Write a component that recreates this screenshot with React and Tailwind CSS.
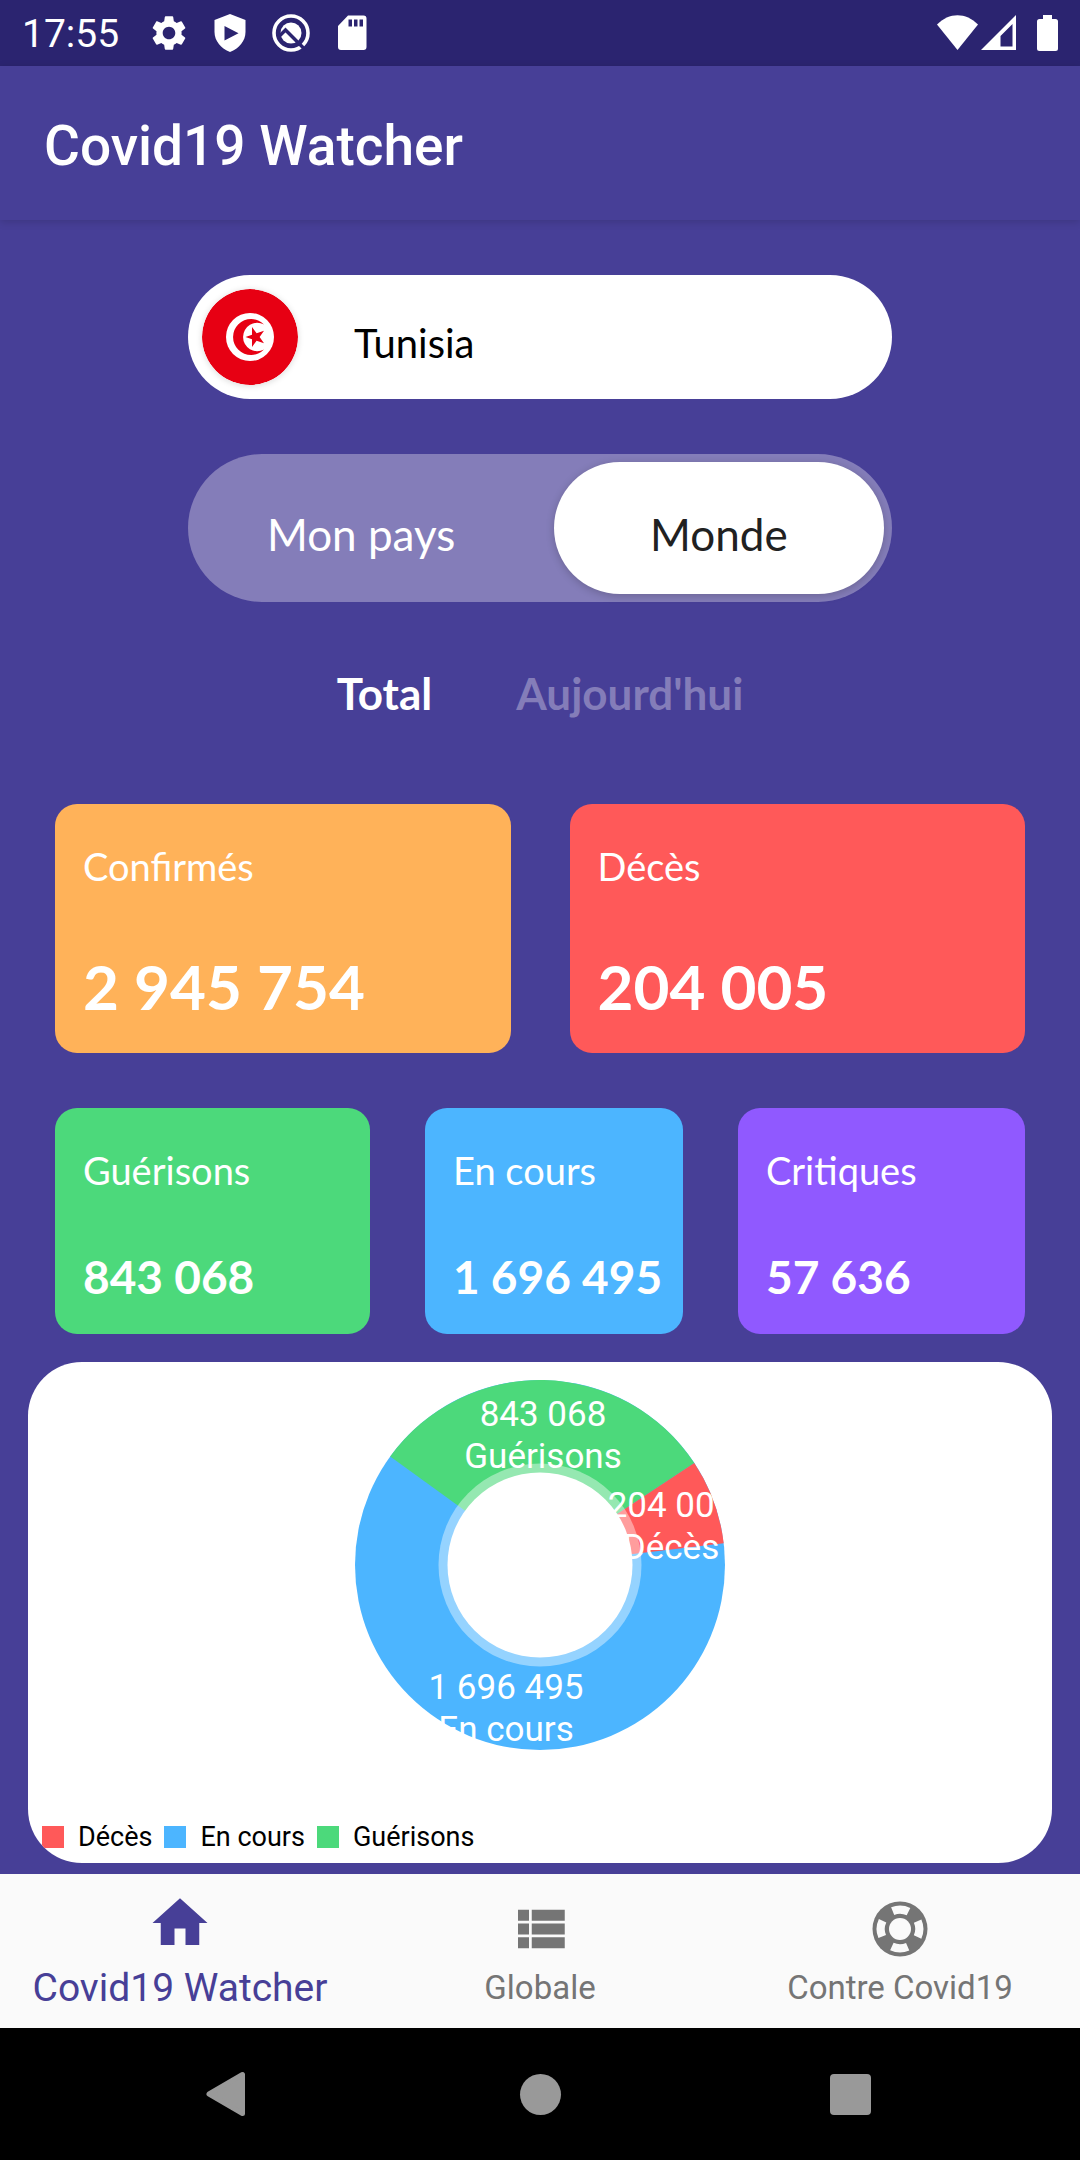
import React from "react";
import { MdSettings, MdHome } from "react-icons/md";

function ShieldPlayIcon() {
  return (
    <svg viewBox="0 0 42 42" className="size-[42px]" aria-hidden="true">
      <path
        fillRule="evenodd"
        fill="#fff"
        d="M21 2 36.500 8v12c0 9-6.500 16.500-15.500 20C12 36.500 5.500 29 5.500 20V8zM15.500 14v14.500l14-7.250z"
      />
    </svg>
  );
}

function QIcon() {
  return (
    <svg viewBox="0 0 42 42" className="size-[42px]" aria-hidden="true">
      <circle cx="21" cy="21" r="17" fill="none" stroke="#fff" strokeWidth="3.6" />
      <circle cx="21" cy="21" r="10.500" fill="#fff" />
      <path d="M9 24.500 15.500 18 35.500 38" fill="none" stroke="#2b2470" strokeWidth="3.4" />
    </svg>
  );
}

function SdCardIcon() {
  return (
    <svg viewBox="0 0 42 42" className="size-[42px]" aria-hidden="true">
      <path
        fillRule="evenodd"
        fill="#fff"
        d="M17 3.500h15.500a3 3 0 0 1 3 3v28.500a3 3 0 0 1-3 3H10a3 3 0 0 1-3-3V14zM17.500 7.500v7h3.500v-7zm5.500 0v7h3.500v-7zm5.500 0v7H32v-7z"
      />
    </svg>
  );
}

function StatusBar() {
  return (
    <div className="flex h-[66px] items-center bg-[#2b2470] pr-[22px] pl-[22px] text-white">
      <span className="pt-0.5 text-[39px] leading-[44px]">17:55</span>
      <div className="ml-[29px] flex items-center gap-[19px]">
        <MdSettings className="size-[42px]" aria-hidden="true" />
        <ShieldPlayIcon />
        <QIcon />
        <SdCardIcon />
      </div>
      <svg viewBox="0 0 121 36" className="ml-auto h-[36px] w-[121px]" fill="#fff" aria-hidden="true">
        <path d="M0 9.500C12-3 29-3 41 9.500L20.500 35z" />
        <path fillRule="evenodd" d="M79 0v35H44zM75.500 9 63.500 21v10.500h12z" />
        <path d="M106 0h9v4h3.500a2.500 2.500 0 0 1 2.500 2.500v27a2.500 2.500 0 0 1-2.500 2.500h-16a2.500 2.500 0 0 1-2.500-2.500v-27a2.500 2.500 0 0 1 2.500-2.500h3.500z" />
      </svg>
    </div>
  );
}

function TunisiaFlag() {
  return (
    <svg
      viewBox="0 0 96 96"
      className="size-24 shrink-0 rounded-full shadow-[0_1px_6px_rgba(0,0,0,0.15)]"
      role="img"
      aria-label="Tunisia"
    >
      <circle cx="48" cy="48" r="48" fill="#e70013" />
      <circle cx="48" cy="48" r="24" fill="#fff" />
      <path fill="#e70013" d="M62 35.500A18 18 0 1 0 62 60.500A14.200 14.200 0 1 1 62 35.500z" />
      <path
        fill="#e70013"
        d="M43.500 48 50 45.800V38l4.600 6.300 7.400-2.500-4.400 6.200 4.400 6.200-7.400-2.500L50 58v-7.800z"
      />
    </svg>
  );
}

function StatCard({ label, value, color, large }) {
  return (
    <div
      className={`min-w-0 rounded-[22px] px-7 pt-[38px] font-[Lato,sans-serif] text-white ${
        large ? "pb-[31px]" : "pb-[29px]"
      } ${color}`}
    >
      <dt className="text-[38px] leading-[48px]">{label}</dt>
      <dd
        className={
          large
            ? "mt-[60px] text-[62px] leading-[72px] font-bold whitespace-nowrap"
            : "mt-[55px] text-[46px] leading-[56px] font-bold whitespace-nowrap"
        }
      >
        {value}
      </dd>
    </div>
  );
}

function Donut() {
  return (
    <svg
      viewBox="0 0 370 370"
      className="mx-auto block size-[370px] overflow-visible"
      fontFamily="Roboto, sans-serif"
      fontSize="35"
      role="img"
      aria-label="Répartition des cas"
    >
      <circle cx="185" cy="185" r="185" fill="#4cb5ff" />
      <path d="M185 185 35.200 76.500A185 185 0 0 1 339.300 83z" fill="#4cd97b" />
      <path d="M185 185 339.300 83A185 185 0 0 1 368.700 163.300z" fill="#ff5959" />
      <circle cx="185" cy="185" r="101.500" fill="#fff" fillOpacity="0.41" />
      <circle cx="185" cy="185" r="92.500" fill="#fff" />
      <g fill="#fff" textAnchor="middle">
        <text x="188" y="46">843 068</text>
        <text x="188" y="88">Guérisons</text>
        <text x="316" y="137">204 005</text>
        <text x="316" y="179">Décès</text>
        <text x="151" y="319">1 696 495</text>
        <text x="151" y="361">En cours</text>
      </g>
    </svg>
  );
}

const legend = [
  { label: "Décès", color: "bg-[#ff5959]" },
  { label: "En cours", color: "bg-[#4cb5ff]" },
  { label: "Guérisons", color: "bg-[#4cd97b]" },
];

function ListIcon() {
  return (
    <svg viewBox="0 0 24 24" className="size-[66px]" fill="currentColor" aria-hidden="true">
      <path d="M4 14h4v-4H4v4zm0 5h4v-4H4v4zM4 9h4V5H4v4zm5 5h12v-4H9v4zm0 5h12v-4H9v4zM9 5v4h12V5H9z" />
    </svg>
  );
}

function BuoyIcon() {
  return (
    <svg viewBox="-33 -33 66 66" className="size-[66px]" aria-hidden="true">
      <circle r="27.500" fill="#757575" />
      <circle
        r="19.300"
        fill="none"
        stroke="#fafafa"
        strokeWidth="8.200"
        strokeDasharray="16.170 14.148"
        transform="rotate(-24)"
      />
      <circle r="11" fill="#fafafa" />
    </svg>
  );
}

export default function App() {
  return (
    <div className="flex min-h-screen flex-col bg-[#473f97] font-[Roboto,sans-serif]">
      <StatusBar />
      <header className="flex h-[154px] items-center px-11 pt-1.5 shadow-[0_2px_8px_rgba(0,0,0,0.15)]">
        <h1 className="text-[55px] leading-[64px] font-medium text-white">Covid19 Watcher</h1>
      </header>

      <main className="flex-1 pt-[55px] pb-[11px]">
        <div className="px-[188px] font-[Lato,sans-serif]">
          <div className="flex h-[124px] items-center rounded-full bg-white pr-14 pl-3.5">
            <TunisiaFlag />
            <select
              aria-label="Pays"
              defaultValue="Tunisia"
              className="ml-14 h-full flex-1 appearance-none bg-transparent pt-3 text-[40px] text-black outline-none"
            >
              <option>Tunisia</option>
            </select>
          </div>

          <div className="mt-[55px] flex h-[148px] justify-between rounded-full bg-[#847db9] p-2 text-[44px]">
            <button type="button" aria-pressed="false" className="w-[48%] rounded-full pt-3 text-white">
              Mon pays
            </button>
            <button
              type="button"
              aria-pressed="true"
              className="w-[48%] rounded-full bg-white pt-3 text-[#212121] shadow-[0_2px_8px_rgba(0,0,0,0.2)]"
            >
              Monde
            </button>
          </div>
        </div>

        <div className="mt-[61px] flex justify-center gap-[84px] font-[Lato,sans-serif] text-[44px] leading-[60px] font-bold">
          <button type="button" className="text-white">
            Total
          </button>
          <button type="button" className="text-[#847db9]">
            Aujourd'hui
          </button>
        </div>

        <dl className="mt-[81px] grid grid-cols-2 gap-[59px] px-[55px]">
          <StatCard large label="Confirmés" value="2 945 754" color="bg-[#ffb259]" />
          <StatCard large label="Décès" value="204 005" color="bg-[#ff5959]" />
        </dl>
        <dl className="mt-[55px] grid grid-cols-[minmax(0,315fr)_minmax(0,258fr)_minmax(0,287fr)] gap-[55px] px-[55px]">
          <StatCard label="Guérisons" value="843 068" color="bg-[#4cd97b]" />
          <StatCard label="En cours" value="1 696 495" color="bg-[#4cb5ff]" />
          <StatCard label="Critiques" value="57 636" color="bg-[#9059ff]" />
        </dl>

        <section className="mx-7 mt-7 overflow-hidden rounded-[54px] bg-white pt-[18px] pb-2.5">
          <Donut />
          <ul className="mt-[71px] flex gap-[12px] pl-[14px]">
            {legend.map((item) => (
              <li key={item.label} className="flex items-center gap-[14px] text-[27px] leading-8 text-black">
                <span className={`size-[22px] ${item.color}`} />
                {item.label}
              </li>
            ))}
          </ul>
        </section>
      </main>

      <nav className="grid h-[154px] grid-cols-3 items-end bg-[#fafafa] pb-[18px] text-[33px] leading-[44px] text-[#757575]">
        <a href="#accueil" aria-current="page" className="flex flex-col items-center gap-2.5 text-[39px] text-[#473f97]">
          <MdHome className="size-[66px]" aria-hidden="true" />
          Covid19 Watcher
        </a>
        <a href="#globale" className="flex flex-col items-center gap-1">
          <ListIcon />
          Globale
        </a>
        <a href="#contre" className="flex flex-col items-center gap-1">
          <BuoyIcon />
          Contre Covid19
        </a>
      </nav>

      <div className="grid h-[132px] grid-cols-3 items-center justify-items-center bg-black px-[75px]">
        <button type="button" aria-label="Retour">
          <svg viewBox="0 0 66 66" className="size-[66px]" aria-hidden="true">
            <path d="M45.500 13.500v39L12 33z" fill="#999" stroke="#999" strokeWidth="5" strokeLinejoin="round" />
          </svg>
        </button>
        <button type="button" aria-label="Accueil" className="size-[41px] rounded-full bg-[#999]" />
        <button type="button" aria-label="Applications récentes" className="size-[41px] rounded-[4px] bg-[#999]" />
      </div>
    </div>
  );
}
